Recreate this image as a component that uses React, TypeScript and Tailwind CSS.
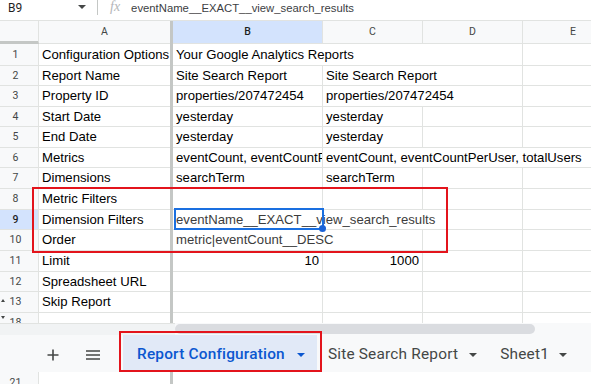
import React from 'react';

type Seg = { w: string; text?: string; right?: boolean; muted?: boolean; open?: boolean };
type Row = { n: string; h: string; a: string; segs: Seg[]; sel?: boolean; up?: boolean; down?: boolean };

const B = (text?: string, right?: boolean): Seg => ({ w: 'w-[150px]', text, right });
const C = (text?: string, right?: boolean): Seg => ({ w: 'w-[100px]', text, right });
const D: Seg = { w: 'w-[100px]' };
const E: Seg = { w: 'flex-1', open: true };

const rows: Row[] = [
  { n: '1', h: 'h-[22px]', a: 'Configuration Options', segs: [{ w: 'w-[350px]', text: 'Your Google Analytics Reports' }, E] },
  { n: '2', h: 'h-[20px]', a: 'Report Name', segs: [B('Site Search Report'), { w: 'w-[200px]', text: 'Site Search Report' }, E] },
  { n: '3', h: 'h-[21px]', a: 'Property ID', segs: [B('properties/207472454'), { w: 'w-[200px]', text: 'properties/207472454' }, E] },
  { n: '4', h: 'h-[20px]', a: 'Start Date', segs: [B('yesterday'), C('yesterday'), D, E] },
  { n: '5', h: 'h-[21px]', a: 'End Date', segs: [B('yesterday'), C('yesterday'), D, E] },
  {
    n: '6',
    h: 'h-[20px]',
    a: 'Metrics',
    segs: [B('eventCount, eventCountPerUser, totalUsers'), { w: 'flex-1', open: true, text: 'eventCount, eventCountPerUser, totalUsers' }],
  },
  { n: '7', h: 'h-[21px]', a: 'Dimensions', segs: [B('searchTerm'), C('searchTerm'), D, E] },
  { n: '8', h: 'h-[21px]', a: 'Metric Filters', segs: [B(), C(), D, E] },
  {
    n: '9',
    h: 'h-[20px]',
    a: 'Dimension Filters',
    sel: true,
    segs: [{ w: 'w-[350px]', text: 'eventName__EXACT__view_search_results', muted: true }, E],
  },
  { n: '10', h: 'h-[21px]', a: 'Order', segs: [{ w: 'w-[250px]', text: 'metric|eventCount__DESC', muted: true }, D, E] },
  { n: '11', h: 'h-[21px]', a: 'Limit', segs: [B('10', true), C('1000', true), D, E] },
  { n: '12', h: 'h-[20px]', a: 'Spreadsheet URL', segs: [B(), C(), D, E] },
  { n: '13', h: 'h-[21px]', a: 'Skip Report', segs: [B(), C(), D, E], up: true },
  { n: '18', h: 'h-[21px]', a: '', segs: [B(), C(), D, E], down: true },
];

const Caret = ({ className }: { className?: string }) => (
  <svg width="8" height="4" viewBox="0 0 8 4" className={className}>
    <path d="M0 0h8L4 4z" fill="currentColor" />
  </svg>
);

const GridRow = ({ r }: { r: Row }) => (
  <div className={`relative flex shrink-0 ${r.h}`}>
    <div
      className={`relative w-[39px] shrink-0 border-r border-b border-[#e1e3e1] flex items-center justify-center pr-[7px] font-['Roboto',sans-serif] text-[10.5px] ${
        r.sel ? 'bg-[#d3e3fd] text-[#1f1f1f] font-medium' : 'bg-[#f8f9fa] text-[#444746]'
      }`}
    >
      {r.n}
      {r.up && (
        <svg width="4" height="3" viewBox="0 0 4 3" className="absolute left-[1px] bottom-[10px] text-[#444746]">
          <path d="M0 3h4L2 0z" fill="currentColor" />
        </svg>
      )}
      {r.down && (
        <svg width="4" height="3" viewBox="0 0 4 3" className="absolute left-[1px] top-[3px] text-[#444746]">
          <path d="M0 0h4L2 3z" fill="currentColor" />
        </svg>
      )}
    </div>
    <div className="w-[131px] shrink-0 border-b border-[#e1e3e1] px-[3px] flex items-center whitespace-nowrap overflow-hidden text-black">
      {r.a}
    </div>
    <div className="w-[3px] shrink-0 bg-[#c4c7c5]" />
    {r.segs.map((s, i) => (
      <div
        key={i}
        className={`${s.w} shrink-0 min-w-0 border-b border-[#e1e3e1] ${s.open ? '' : 'border-r'} px-[3px] flex items-center whitespace-nowrap overflow-hidden ${
          s.right ? 'justify-end' : ''
        } ${s.muted ? 'text-[#3c3c3c]' : 'text-black'}`}
      >
        {s.text}
      </div>
    ))}
    {r.sel && (
      <div className="absolute left-[174px] top-[-2px] w-[150px] h-[22px] border-2 border-[#1a6fe0] z-10">
        <div className="absolute right-[-4px] bottom-[-4px] w-[7px] h-[7px] rounded-full bg-[#1a62d6]" />
      </div>
    )}
  </div>
);

export default function App() {
  return (
    <div className="relative w-[591px] h-[384px] overflow-hidden bg-white flex flex-col font-['Liberation_Sans',Arial,sans-serif] text-[13.15px]">
      {/* formula bar */}
      <div className="h-[20px] shrink-0 flex items-start bg-white">
        <div className="w-[74px] pl-[8px] pt-[1px] text-[12px] leading-[14px] text-[#1f1f1f] font-['Roboto',sans-serif]">B9</div>
        <Caret className="ml-[4px] mt-[5px] text-[#444746]" />
        <div className="ml-[11px] w-px h-[15px] bg-[#c4c7c5]" />
        <div className="ml-[12px] text-[14px] leading-[14px] italic text-[#b4b6b9] font-['Liberation_Serif',serif]">fx</div>
        <div className="ml-[11px] pt-[1px] text-[11.3px] leading-[14px] text-[#3c4043]">eventName__EXACT__view_search_results</div>
      </div>

      {/* grid */}
      <div className="h-[303px] shrink-0 overflow-hidden flex flex-col">
        <div className="h-[24px] shrink-0 flex border-t border-[#e1e3e1] font-['Roboto',sans-serif] text-[10.5px] text-[#444746]">
          <div className="w-[39px] shrink-0 bg-[#f8f9fa] border-r border-r-[#e1e3e1] border-b-[3px] border-b-[#c4c7c5]" />
          <div className="w-[131px] shrink-0 bg-[#f8f9fa] border-b border-[#e1e3e1] flex items-center justify-center">A</div>
          <div className="w-[3px] shrink-0 bg-[#c4c7c5]" />
          <div className="w-[150px] shrink-0 bg-[#d3e3fd] border-b border-r border-[#e1e3e1] flex items-center justify-center text-[#1f1f1f] font-medium">
            B
          </div>
          <div className="w-[100px] shrink-0 bg-[#f8f9fa] border-b border-r border-[#e1e3e1] flex items-center justify-center">C</div>
          <div className="w-[100px] shrink-0 bg-[#f8f9fa] border-b border-r border-[#e1e3e1] flex items-center justify-center">D</div>
          <div className="w-[100px] shrink-0 bg-[#f8f9fa] border-b border-[#e1e3e1] flex items-center justify-center">E</div>
        </div>
        {rows.map((r) => (
          <GridRow key={r.n} r={r} />
        ))}
      </div>

      {/* horizontal scrollbar */}
      <div className="h-[12px] shrink-0 flex bg-[#f8f9fa]">
        <div className="w-[175px] shrink-0 bg-[#f1f3f4] border-t border-[#e1e3e1]" />
        <div className="w-[360px] shrink-0 h-[10px] mt-[1px] rounded-[5px] bg-[#dadce0]" />
      </div>

      {/* sheet tabs */}
      <div className="h-[37px] shrink-0 bg-[#f8f9fa] flex items-start font-['Roboto',sans-serif] text-[15.4px] tracking-[0.2px]">
        <svg width="12" height="12" viewBox="0 0 12 12" className="ml-[47px] mt-[14px] text-[#444746]">
          <path d="M6 0.5v11M0.5 6h11" stroke="currentColor" strokeWidth="1.6" />
        </svg>
        <svg width="14" height="10" viewBox="0 0 14 10" className="ml-[27px] mt-[15px] text-[#444746]">
          <path d="M0 1h14M0 5h14M0 9h14" stroke="currentColor" strokeWidth="1.5" />
        </svg>
        <div className="ml-[23px] h-[35px] flex items-center pt-[4px] pl-[14px] pr-[12px] gap-[12px] bg-[#e1e9f7] text-[#0b57d0] font-medium">
          <span>Report Configuration</span>
          <Caret />
        </div>
        <div className="h-[35px] flex items-center pt-[4px] pl-[11px] pr-[12px] gap-[11px] text-[#444746]">
          <span>Site Search Report</span>
          <Caret />
        </div>
        <div className="h-[35px] flex items-center pt-[4px] pl-[11px] gap-[10px] text-[#444746]">
          <span>Sheet1</span>
          <Caret />
        </div>
      </div>

      {/* row peeking under the tab bar */}
      <div className="h-[12px] shrink-0 overflow-hidden">
        <div className="h-[21px] flex">
          <div className="w-[39px] shrink-0 border-r border-[#e1e3e1] bg-[#f8f9fa] flex items-center justify-center pr-[7px] font-['Roboto',sans-serif] text-[10.5px] text-[#444746]">
            21
          </div>
          <div className="w-[131px] shrink-0" />
          <div className="w-[3px] shrink-0 bg-[#c4c7c5]" />
        </div>
      </div>

      {/* annotations */}
      <div className="absolute left-[32px] top-[187px] w-[416px] h-[66px] border-2 border-[#e3141c] z-20" />
      <div className="absolute left-[119px] top-[331px] w-[203px] h-[41px] border-2 border-[#e3141c] z-20" />
    </div>
  );
}
